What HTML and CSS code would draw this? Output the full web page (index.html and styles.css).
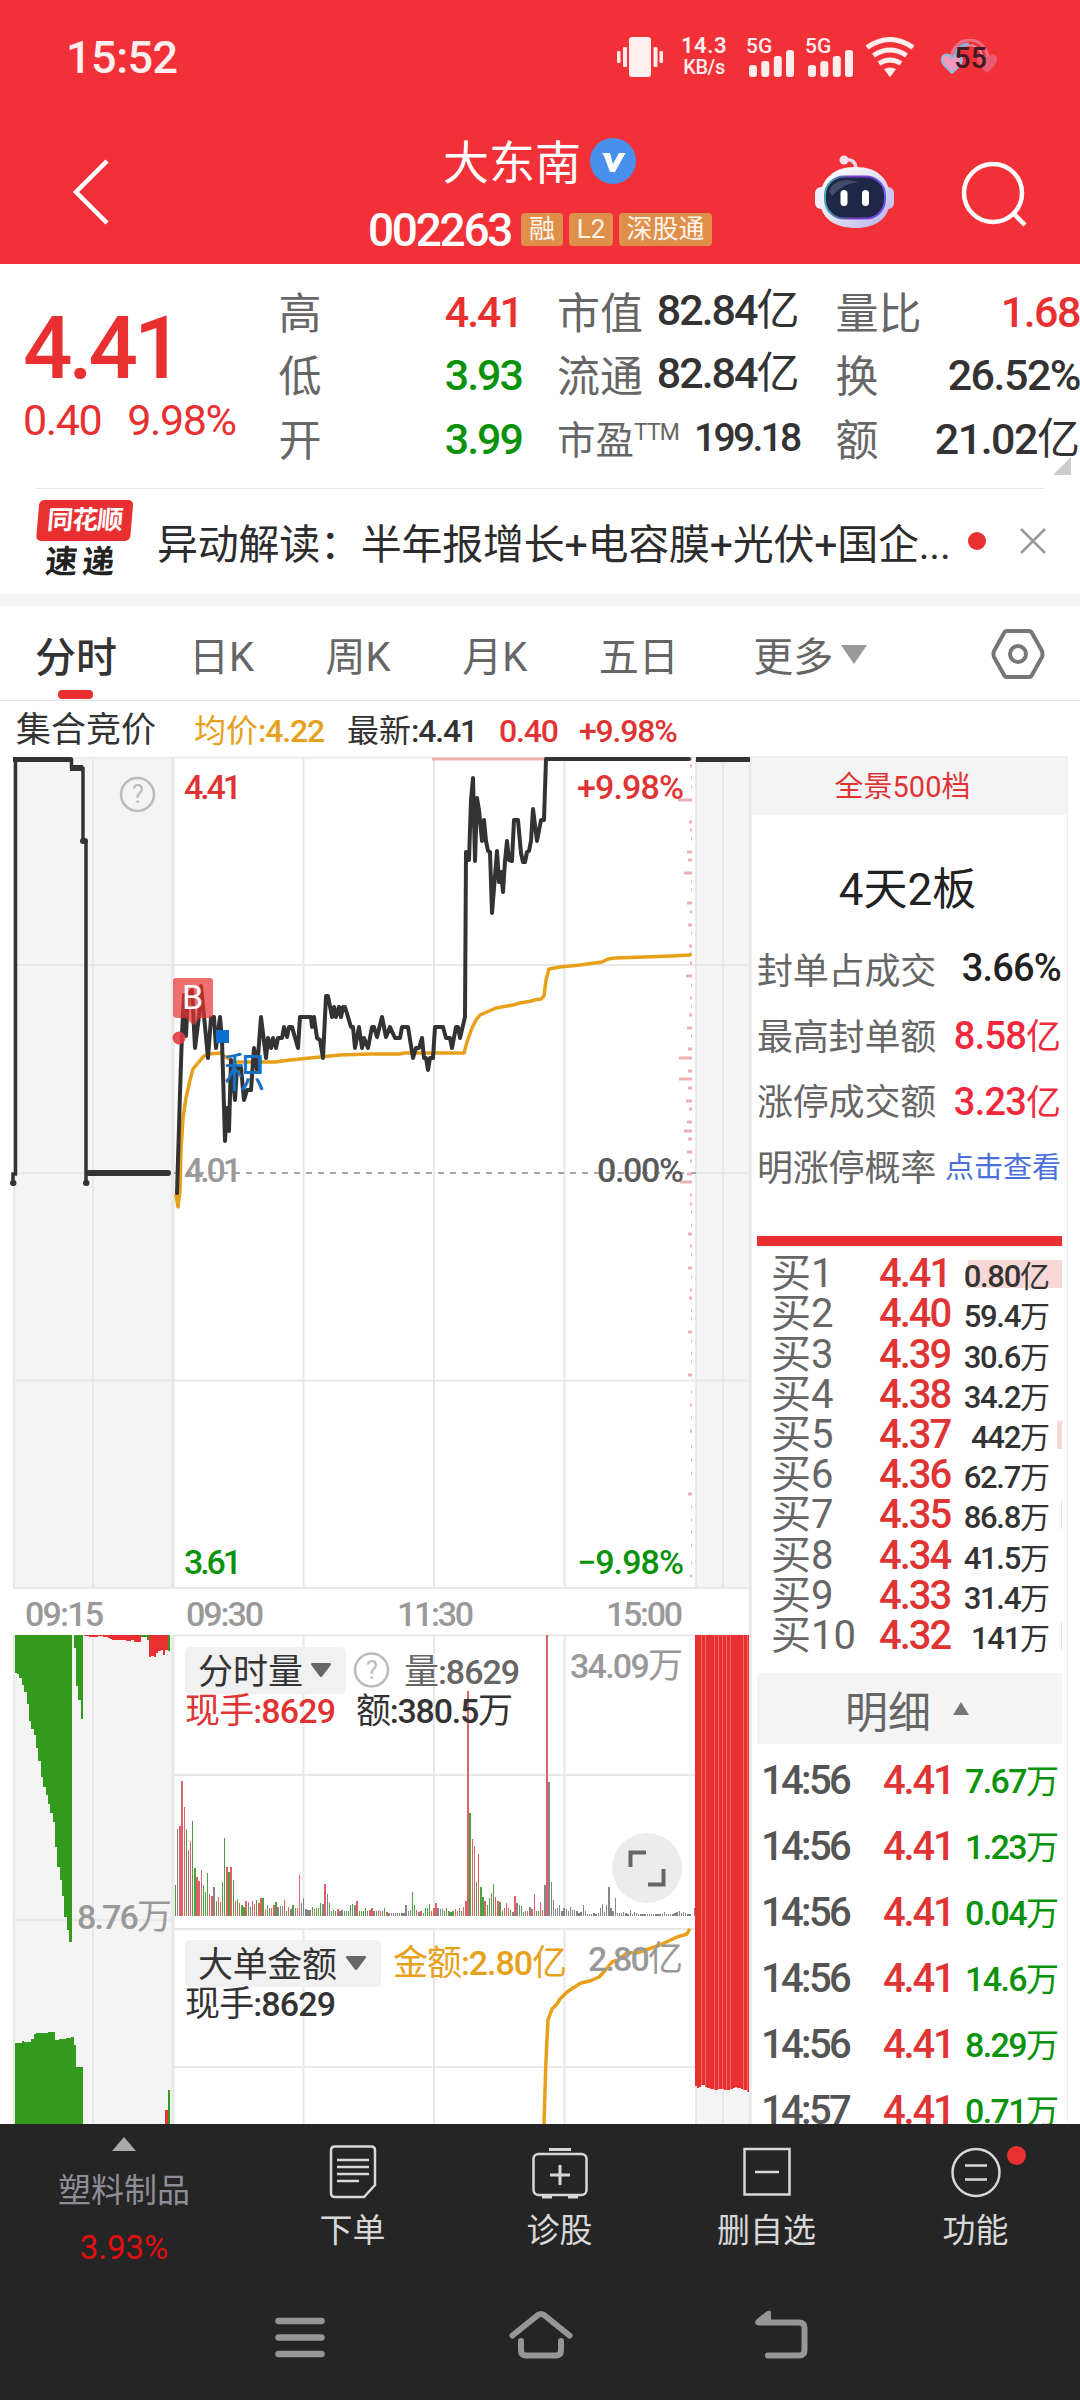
FILE: index.html
```html
<!DOCTYPE html>
<html lang="zh-CN">
<head>
<meta charset="utf-8">
<title>大东南 002263</title>
<link rel="stylesheet" href="styles.css">
</head>
<body>
<div class="screen">
  <header class="top">
    <div class="status">
      <span class="clock">15:52</span>
      <svg class="vibrate" width="46" height="40" viewBox="0 0 46 40" fill="#ffeeee"><rect x="12" width="22" height="40" rx="3"/><rect x="6" y="10" width="4" height="20" rx="1"/><rect y="14" width="3.5" height="12" rx="1"/><rect x="36.5" y="10" width="4" height="20" rx="1"/><rect x="42.5" y="14" width="3.5" height="12" rx="1"/></svg>
      <span class="net"><b>14.3</b><i>KB/s</i></span>
      <span class="sim"><em>5G</em><svg width="46" height="27" viewBox="0 0 46 27" fill="#ffeeee"><rect y="15" width="8" height="12" rx="3"/><rect x="12.3" y="11" width="8" height="16" rx="3"/><rect x="24.8" y="6" width="8" height="21" rx="3"/><rect x="37" width="8" height="27" rx="3"/></svg></span>
      <span class="sim"><em>5G</em><svg width="46" height="27" viewBox="0 0 46 27" fill="#ffeeee"><rect y="15" width="8" height="12" rx="3"/><rect x="12.3" y="11" width="8" height="16" rx="3"/><rect x="24.8" y="6" width="8" height="21" rx="3"/><rect x="37" width="8" height="27" rx="3"/></svg></span>
      <svg class="wifi" width="50" height="40" viewBox="0 0 50 40" fill="none" stroke="#ffeeee" stroke-width="5"><path d="M2 10.5Q25-5.500 48 10.500"/><path d="M8.500 18.500Q25 7.500 41.500 18.500"/><path d="M14 26.500Q25 19.500 36 26.500"/><path d="M19 32Q25 29 31 32L26 39Q25 40.500 24 39Z" fill="#ffeeee" stroke="none"/></svg>
      <span class="battery"><svg width="60" height="36" viewBox="0 0 60 36"><path d="M11 19C14-5 45-5 48 19" fill="none" stroke="#ee6f86" stroke-width="3"/><path d="M16 19C19 2 40 2 43 19" fill="none" stroke="#f08c9c" stroke-width="2"/><path d="M14 19C16 9 22 5 29 5" fill="none" stroke="#86b2d8" stroke-width="3"/><path d="M12 34C2 25 1 22 2 19C4 14 10 15 12 19C15 15 22 15 22 22Q21 26 12 34Z" fill="#f29ac0" stroke="#88bfe0" stroke-width="2"/><path d="M47 34C37 25 36 22 38 18C40 14 46 15 47 19C50 14 56 14 57 20Q57 26 47 34Z" fill="#ea5b73"/></svg><b>55</b></span>
    </div>
    <div class="titlebar">
      <svg class="back" width="38" height="66" viewBox="0 0 38 66" fill="none" stroke="#fff" stroke-width="4.500"><path d="M35 2L4 33L35 64"/></svg>
      <div class="name">
        <h1>大东南<svg width="46" height="46" viewBox="0 0 46 46"><circle cx="23" cy="23" r="23" fill="#4790ec"/><path d="M12 15H20L23 26L29 15H35.500L25 34H20L14 18Z" fill="#fff"/></svg></h1>
        <p><span class="code">002263</span><span class="tag">融</span><span class="tag t2">L2</span><span class="tag t3">深股通</span></p>
      </div>
      <svg class="robot" width="80" height="74" viewBox="0 0 80 74"><defs><linearGradient id="shell" x1="0" y1="0" x2="1" y2="1"><stop offset="0" stop-color="#fff"/><stop offset=".5" stop-color="#e4e3f5"/><stop offset="1" stop-color="#b4aeea"/></linearGradient><linearGradient id="rim"><stop offset="0" stop-color="#3fa6a8"/><stop offset=".5" stop-color="#7a35c8"/><stop offset="1" stop-color="#6a53f0"/></linearGradient></defs><path d="M29 5Q40 3 41 13" fill="none" stroke="#f0d5e6" stroke-width="3.500"/><circle cx="29" cy="5" r="4.500" fill="#f3dfee"/><rect x="0" y="32" width="14" height="22" rx="6" fill="#efeef9"/><rect x="66" y="32" width="13" height="22" rx="6" fill="#cbc6ee"/><path d="M40 12C64 12 75 25 75 44C75 64 60 73 41 73C20 73 5 64 5 44C5 25 18 12 40 12Z" fill="url(#shell)"/><rect x="10" y="21.500" width="60" height="42" rx="19" fill="#1f2746" stroke="url(#rim)" stroke-width="2"/><path d="M14 36Q18 25 34 25L44 27Q28 28 17 41Z" fill="#444c69"/><rect x="25.500" y="35" width="7" height="16" rx="3.500" fill="#fff"/><rect x="47" y="35" width="7" height="16" rx="3.500" fill="#fff"/></svg>
      <svg class="search" width="66" height="66" viewBox="0 0 66 66" fill="none" stroke="#fff" stroke-width="4.500"><circle cx="32" cy="32" r="29"/><path d="M52 52L64 64"/></svg>
    </div>
  </header>

  <section class="quote">
    <div class="last"><strong>4.41</strong><p><span>0.40</span><span>9.98%</span></p></div>
    <dl class="c1"><div><dt>高</dt><dd class="up">4.41</dd></div><div><dt>低</dt><dd class="down">3.93</dd></div><div><dt>开</dt><dd class="down">3.99</dd></div></dl>
    <dl class="c2"><div><dt>市值</dt><dd>82.84<u>亿</u></dd></div><div><dt>流通</dt><dd>82.84<u>亿</u></dd></div><div class="pe"><dt>市盈<sup>TTM</sup></dt><dd>199.18</dd></div></dl>
    <dl class="c3"><div><dt>量比</dt><dd class="up">1.68</dd></div><div><dt>换</dt><dd>26.52%</dd></div><div><dt>额</dt><dd>21.02<u>亿</u></dd></div></dl>
    <i class="corner"></i>
  </section>

  <section class="news">
    <div class="brand"><b>同花顺</b><i>速递</i></div>
    <p>异动解读：半年报增长+电容膜+光伏+国企...</p>
    <span class="dot"></span>
    <svg class="close" width="26" height="26" viewBox="0 0 26 26" stroke="#999" stroke-width="2.500"><path d="M1 1L25 25M25 1L1 25"/></svg>
  </section>

  <nav class="tabs">
    <a class="on">分时</a><a>日K</a><a>周K</a><a>月K</a><a>五日</a><a class="more">更多<i></i></a>
    <svg width="54" height="52" viewBox="0 0 54 52" fill="none" stroke="#777" stroke-width="4"><path d="M16 3H38Q40 3 41 5L51 23Q52 26 51 29L41 47Q40 49 38 49H16Q14 49 13 47L3 29Q2 26 3 23L13 5Q14 3 16 3Z"/><circle cx="27" cy="26" r="8"/></svg>
  </nav>

  <main class="body">
    <div class="left">
      <div class="legend"><span class="l0">集合竞价</span><span class="l1">均价<b>:4.22</b></span><span class="l2">最新<b>:4.41</b></span><span class="l3"><b>0.40</b></span><span class="l4"><b>+9.98%</b></span></div>
      <svg class="chart" width="752" height="1367" viewBox="0 757 752 1367">
        <g fill="#f4f4f4"><path d="M14 757H173V1588H14Z"/><path d="M14 1635H173V2124H14Z"/><path d="M696 757H751V1588H696Z"/><path d="M696 1635H751V2124H696Z"/></g>
        <g stroke="#e8e8e8" stroke-width="2" fill="none">
          <path d="M14 757.500H751M14 965H751M14 1173H173M696 1173H751M14 1380.500H751M14 1588H751M173 1635.500H696M173 1775H696M14 1920H173M696 1920H751M173 1929H696M173 2067H696"/>
          <path d="M14 757V1588M93 757V1588M303.500 757V1588M434 757V1588M564.500 757V1588M723 757V1588M14 1635V2124M93 1635V2124M303.500 1635V1916M303.500 1929V2124M434 1635V1916M434 1929V2124M564.500 1635V1916M564.500 1929V2124M723 1635V2124M696 757V1588M696 1635V2124"/>
          <path d="M173 757V1588M173 1635V2124M750.500 757V2124" stroke-width="3.500"/>
        </g>
        <path d="M174 1173H696" stroke="#888" stroke-width="1.600" stroke-dasharray="6 6"/>
        <g id="ticks" fill="#eeb1b3"></g>
        <g id="volume" shape-rendering="crispEdges"></g>
        <path d="M432 759H546" stroke="#eeb0b0" stroke-width="3"/>
        <rect x="185" y="1647" width="161" height="47" rx="5" fill="#f1f1f1"/>
        <rect x="185" y="1940" width="196" height="47" rx="5" fill="#f1f1f1"/>
        <g fill="none" stroke-linejoin="round" stroke-linecap="round">
          <path stroke="#e6a01a" stroke-width="3.500" d="M176 1195L178 1207L180 1190L181 1150L183 1118L186 1098L190 1080L193 1069L198 1063L204 1056L209 1054L221 1053L224 1056L235 1062L275 1062L290 1060L310 1058L340 1055L370 1054L400 1054L404 1053L464 1053L467 1042L472 1028L476 1020L480 1015L496 1008L513 1005L520 1003L532 1001L534 1000L541 999L544 996L546 980L549 969L560 967L580 965L602 962L608 959L615 958L645 957L672 956L690 955"/>
          <path stroke="#333" stroke-width="4" d="M177 1193L180 1093L182 1033L184 995L186 1036L188 995L192 990L195 1048L199 1016L201 986L204 1016L208 1058L211 1018L214 1017L216 1048L220 1017L222 1040L225 1141L227 1108L229 1131L231 1060L235 1100L237 1068L241 1068L244 1100L247 1090L251 1090L254 1048L257 1070L261 1017L266 1058L268 1038L271 1048L273 1038L276 1048L278 1038L282 1038L284 1027L287 1037L289 1027L292 1027L298 1048L300 1017L311 1017L312 1027L314 1017L317 1038L320 1040L323 1058L326 996L328 996L332 1017L334 1007L336 1017L339 1007L341 1017L343 1007L345 1007L348 1017L351 1027L353 1027L355 1048L359 1027L362 1048L364 1038L368 1048L372 1027L374 1027L377 1037L382 1017L386 1037L390 1027L395 1038L400 1038L402 1027L408 1027L413 1058L416 1048L419 1048L422 1038L424 1058L426 1058L428 1070L430 1058L433 1058L435 1027L443 1027L446 1038L450 1038L452 1048L456 1027L458 1027L460 1038L465 1017L466 852L469 860L471 800L473 778L475 861L477 798L479 810L482 841L484 820L486 841L488 851L490 852L492 913L497 851L499 882L501 872L503 892L505 861L507 841L509 860L512 861L514 820L518 820L521 853L523 862L525 862L527 852L529 851L531 841L533 809L537 841L541 820L544 820L546 759L689 759"/>
          <path stroke="#333" stroke-width="3.500" stroke-linejoin="miter" d="M13 1182V1174H15.500V759M71.500 759V768M83 768V841M86 841V1182"/>
          <path stroke="#333" stroke-width="6" stroke-linecap="butt" d="M13 759H71.500M70 768H83M696 759H750"/>
          <path stroke="#333" stroke-width="6" d="M83 841H85M13 1183H13.500M86 1183H86.500M89 1173H168"/>
          <path stroke="#e6a01a" stroke-width="3.500" d="M544 2124L545.700 2068L546.700 2045L548 2020L552 2009L557 2004L560 1999L567 1992L573 1988L581 1983L590 1981L599 1977L605 1970.500L612 1962L618 1960L627 1953L638 1952.500L647 1949.500L660 1945L677 1937L687 1934L689 1930"/>
        </g>
        <path d="M176 978H210Q213 978 213 981V1014Q213 1018 209 1018H200L193 1025L186 1018H177Q173 1018 173 1014V981Q173 978 176 978Z" fill="#e83030" fill-opacity=".7"/>
        <circle cx="179" cy="1038" r="6.500" fill="#e03c40" fill-opacity=".9"/>
        <rect x="216" y="1030" width="13" height="13" fill="#0a6fce"/>
        <g class="txt">
          <text x="182" y="1009" fill="#fff" class="mark">B</text>
          <text x="224" y="1087" class="mark tag-ji" fill="#1670c4">积</text>
          <text x="184" y="799" textLength="58" fill="#e03434">4.41</text>
          <text x="577" y="799" textLength="107" fill="#e03434">+9.98%</text>
          <text x="184" y="1182" textLength="58" fill="#999">4.01</text>
          <text x="597" y="1182" textLength="87" fill="#5a5a5a">0.00%</text>
          <text x="184" y="1573.500" textLength="58" fill="#0a920a">3.61</text>
          <text x="577" y="1573.500" textLength="107" fill="#0a920a">−9.98%</text>
          <g fill="#999">
            <text x="25" y="1626" textLength="79">09:15</text><text x="186" y="1626" textLength="78">09:30</text><text x="397" y="1626" textLength="77">11:30</text><text x="606" y="1626" textLength="77">15:00</text>
            <text x="570" y="1678" textLength="113">34.09<tspan class="cn">万</tspan></text>
            <text x="77" y="1929" textLength="95">8.76<tspan class="cn">万</tspan></text>
            <text x="588" y="1970.500" textLength="95">2.80<tspan class="cn">亿</tspan></text>
          </g>
          <g class="cn" fill="#333"><text x="198" y="1684">分时量</text><text x="198" y="1977" textLength="139">大单金额</text></g>
          <text x="404" y="1683.500" textLength="116" fill="#666"><tspan class="cn">量</tspan>:8629</text>
          <text x="185" y="1723" textLength="151" fill="#e03434"><tspan class="cn">现手</tspan>:8629</text>
          <text x="356" y="1723" textLength="157" fill="#333"><tspan class="cn">额</tspan>:380.5<tspan class="cn">万</tspan></text>
          <text x="393" y="1975" textLength="174" fill="#e6a01a"><tspan class="cn">金额</tspan>:2.80<tspan class="cn">亿</tspan></text>
          <text x="185" y="2016" textLength="151" fill="#333"><tspan class="cn">现手</tspan>:8629</text>
          <g fill="#bbb" class="help" text-anchor="middle"><text x="138" y="803">?</text><text x="372" y="1678.500">?</text></g>
        </g>
        <g fill="none" stroke="#bbb" stroke-width="2.500"><circle cx="137.500" cy="794.500" r="16.500"/><circle cx="371.500" cy="1670" r="16.500"/></g>
        <path d="M312 1663H330Q332 1664 330 1666L322.500 1676Q321 1678 319.500 1676L312 1666Q310 1664 312 1663ZM347 1956H365Q367 1957 365 1959L357.500 1969Q356 1971 354.500 1969L347 1959Q345 1957 347 1956Z" fill="#666"/>
        <circle cx="647" cy="1868" r="35" fill="#ececec"/>
        <path d="M630.500 1867V1852.500H646M648 1884.500H663.500V1869" fill="none" stroke="#666" stroke-width="4"/>
      </svg>
    </div>

    <aside class="side">
      <div class="depth">全景500档</div>
      <div class="boards">4天2板</div>
      <ul class="facts">
        <li><span>封单占成交</span><b>3.66%</b></li>
        <li><span>最高封单额</span><b class="hot">8.58<u>亿</u></b></li>
        <li><span>涨停成交额</span><b class="hot">3.23<u>亿</u></b></li>
        <li><span>明涨停概率</span><a>点击查看</a></li>
      </ul>
      <div class="ratio"></div>
      <ol class="bids">
        <li><span>买1</span><b>4.41</b><em style="--w:94px">0.80<u>亿</u></em></li>
        <li><span>买2</span><b>4.40</b><em>59.4<u>万</u></em></li>
        <li><span>买3</span><b>4.39</b><em>30.6<u>万</u></em></li>
        <li><span>买4</span><b>4.38</b><em>34.2<u>万</u></em></li>
        <li><span>买5</span><b>4.37</b><em style="--w:5px">442<u>万</u></em></li>
        <li><span>买6</span><b>4.36</b><em>62.7<u>万</u></em></li>
        <li><span>买7</span><b>4.35</b><em style="--w:1px">86.8<u>万</u></em></li>
        <li><span>买8</span><b>4.34</b><em>41.5<u>万</u></em></li>
        <li><span>买9</span><b>4.33</b><em>31.4<u>万</u></em></li>
        <li><span>买10</span><b>4.32</b><em style="--w:1px">141<u>万</u></em></li>
      </ol>
      <div class="detail">明细<i></i></div>
      <ol class="trades">
        <li><span>14:56</span><b>4.41</b><em>7.67<u>万</u></em></li>
        <li><span>14:56</span><b>4.41</b><em>1.23<u>万</u></em></li>
        <li><span>14:56</span><b>4.41</b><em>0.04<u>万</u></em></li>
        <li><span>14:56</span><b>4.41</b><em>14.6<u>万</u></em></li>
        <li><span>14:56</span><b>4.41</b><em>8.29<u>万</u></em></li>
        <li><span>14:57</span><b>4.41</b><em>0.71<u>万</u></em></li>
      </ol>
    </aside>
  </main>

  <footer class="bottom">
    <div class="actions">
      <div class="sector"><i></i><span>塑料制品</span><b>3.93%</b></div>
      <div class="act a1"><svg width="48" height="54" viewBox="0 0 48 54" fill="none" stroke="#d8d8d8" stroke-width="2.500"><path d="M6 1.500H42Q46 1.500 46 5.500V40L35 52H6Q2 52 2 48V5.500Q2 1.500 6 1.500Z"/><path d="M8 15H40M8 22H40M8 29H40M8 36H30"/></svg><span>下单</span></div>
      <div class="act a2"><svg width="56" height="54" viewBox="0 0 56 54" fill="none" stroke="#d8d8d8" stroke-width="2.500"><path d="M17 4.500H39" stroke-width="3"/><rect x="1.500" y="9" width="53" height="41" rx="5"/><path d="M18 30H38M28 20V40M10 52H20M36 52H46" stroke-width="3"/></svg><span>诊股</span></div>
      <div class="act a3"><svg width="48" height="54" viewBox="0 0 48 54" fill="none" stroke="#d8d8d8" stroke-width="2.500"><path d="M1.500 4H46.500V49.500H1.500ZM12 27H36"/></svg><span>删自选</span></div>
      <div class="act a4"><svg width="50" height="54" viewBox="0 0 50 54" fill="none" stroke="#d8d8d8" stroke-width="2.500"><circle cx="25" cy="27.500" r="23.500"/><path d="M14 20.500H36M14 34.500H36"/></svg><span>功能</span><em></em></div>
    </div>
    <div class="sysnav">
      <svg width="50" height="48" viewBox="0 0 50 48" stroke="#969696" stroke-width="6.500" stroke-linecap="round"><path d="M3.500 11H46.500M3.500 27.500H46.500M3.500 44H46.500"/></svg>
      <svg width="64" height="50" viewBox="0 0 64 50" fill="none" stroke="#969696" stroke-width="6" stroke-linecap="round" stroke-linejoin="round"><path d="M3.500 25.500L29 5Q32 3 35 5L60.500 25.500M12 31V40Q12 45.500 17 45.500H47Q52 45.500 52 40V31"/></svg>
      <svg width="54" height="50" viewBox="0 0 54 50" fill="none" stroke="#969696" stroke-width="6" stroke-linecap="round" stroke-linejoin="round"><path d="M5 12.500H45Q50.500 12.500 50.500 18V40Q50.500 45.500 45 45.500H14"/><path d="M17 2V15H3Q-1 13 3 9L12 2Q16-1 17 2Z" fill="#969696" stroke="none"/></svg>
    </div>
  </footer>
</div>
<script src="chart.js"></script>
</body>
</html>
```
FILE: chart.js
```js
const NS = 'http://www.w3.org/2000/svg';
const vol = document.getElementById('volume');
const ticks = document.getElementById('ticks');

function bar(parent, x, y, w, h, fill) {
  const r = document.createElementNS(NS, 'rect');
  r.setAttribute('x', x);
  r.setAttribute('y', y);
  r.setAttribute('width', w);
  r.setAttribute('height', h);
  if (fill) r.setAttribute('fill', fill);
  parent.appendChild(r);
}

/* minute volume: height then colour (r up, g down, k flat) */
const minute = ('80g 228k 235r 353r 285r 227g 173r 195r 247g 125g 103r 92r 119r 80g 64g 113g 58r 53r 76k 38g 50r 37r 90g 203g ' +
  '128r 115g 127r 94g 40r 44g 34r 28g 24g 40r 37k 24g 40r 32r 42g 34r 47r 46g 18r 28k 22g 20r 28r 36g 24k 25k 25k 42r 13g 23r ' +
  '18k 28g 20k 20r 108r 34k 46k 18k 16k 16k 24g 18r 20g 20g 34g 32k 84r 58k 34g 13k 16g 14g 19r 14k 16k 14g 12k 12g 28g 32g ' +
  '28k 38r 14g 12g 14g 20g 12k 16r 20r 14k 12g 16r 14r 14g 20g 10r 8k 8k 7k 8g 8r 7k 8k 7k 28k 14k 16k 62g 28g 16r 10k 12r ' +
  '8k 22g 20g 32g 14r 20r 34r 20k 18k 18k 12g 20g 12k 10g 14g 18r 14r 20k 14g 24r 38r 588r 270g 200r 182r 88g 162r 75g 50g ' +
  '40r 28g 48g 60k 84g 50r 38r 36g 14g 20r 34r 22r 16g 10k 52r 34k 28k 26g 10g 14k 14r 24k 18r 58r 12g 14g 36r 16r 80k 735r ' +
  '350k 90k 42k 18k 20k 28k 12k 20k 18k 12k 24k 16k 16k 14k 8k 10k 30k 12k 6k 6k 6k 7k 6k 7k 22k 32k 10k 30k 75k 20k 14k ' +
  '46k 8k 8k 7k 10k 7k 6k 16k 6k 10k 9k 5k 5k 5k 4k 4k 5k 6k 4k 4k 4k 4k 5k 10k 5k 6k 5k 5k 8k 10k 14k 8k 10k 8k 6k 6k 0k 20k').split(' ');
const tone = { r: '#dd6165', g: '#4da142', k: '#858585' };
minute.forEach((m, i) => {
  const h = parseInt(m, 10) / 2.613;
  bar(vol, (175 + i * 2.134).toFixed(2), (1916 - h).toFixed(2), 1.35, h.toFixed(2), tone[m.slice(-1)]);
});

/* opening auction */
const green = '#329b1d', red = '#e83030';
const matched = [348, 350, 362, 380, 397, 430, 475, 494, 510, 545, 578, 621, 645, 668, 690, 713, 738, 803, 855, 890, 932, 985, 1021, 1051];
matched.forEach((b, i) => bar(vol, 14.7 + i * 2.37, 1635, 2.4, (b - 249) / 2.613, green));
[282, 381, 418, 468].forEach((b, i) => bar(vol, 73.5 + i * 2.37, 1635, 2.4, (b - 249) / 2.613, green));
const late = [3, 3, 5, 6, 5, 4, 3, 3, 4, 5, 8, 11, 12, 12, 13, 14, 14, 13, 15, 16, 12, 18, 17, 18];
late.forEach((h, i) => bar(vol, 84 + i * 2.36, 1635, 2.4, h / 2.613, red));
bar(vol, 141, 1635, 8, 1.5, green);
bar(vol, 147, 1635, 2, 5, green);
[58, 56, 58, 48, 41, 39, 53, 40].forEach((h, i) => bar(vol, 149 + i * 2.33, 1635, 2.4, h / 2.613, red));
bar(vol, 167.5, 1635, 2.6, 16, green);

const rest = [1314, 1314, 1314, 1310, 1312, 1312, 1312, 1303, 1292, 1288, 1288, 1287, 1287, 1287, 1286, 1286, 1286, 1307, 1306, 1305, 1304, 1303, 1301, 1300, 1299, 1320, 1377, 1377, 1377];
rest.forEach((t, i) => {
  const y = 1540 + t / 2.613;
  bar(vol, 14.7 + i * 2.352, y, 2.4, 2124 - y, green);
});
bar(vol, 165, 2110, 2.5, 14, red);
bar(vol, 167.5, 2090, 2.8, 34, green);

/* closing auction */
const close = [1428, 1432, 1430, 1425, 1426, 1431, 1432, 1434, 1435, 1437, 1437, 1436, 1435, 1436, 1437, 1437, 1437, 1436, 1433, 1431, 1433, 1432, 1434, 1437, 1438, 1442];
close.forEach((b, i) => {
  const h = (b - 249) / 2.613;
  bar(vol, 695 + i * 2.08, 1635, 2.2, h, red);
  if (i % 2 && i > 2) bar(vol, 695 + i * 2.08, 1635, 0.8, h, '#f06a6a');
});

/* price distribution at the right edge of the session */
[[759, 2], [766, 2], [778, 1], [787, 1], [800, 14], [822, 3], [830, 2], [839, 1], [852, 5], [860, 4], [873, 8], [882, 1], [890, 1], [903, 5], [912, 2], [925, 4],
 [933, 1], [946, 3], [954, 3], [963, 2], [976, 6], [985, 1], [998, 2], [1006, 1], [1015, 3], [1028, 5], [1036, 1], [1049, 4], [1058, 13], [1071, 4], [1079, 13],
 [1088, 4], [1101, 6], [1109, 3], [1122, 5], [1131, 8], [1139, 4], [1152, 5], [1161, 2], [1174, 5], [1182, 12], [1195, 2], [1204, 2], [1212, 1], [1225, 1], [1234, 4],
 [1246, 2], [1255, 1], [1268, 4], [1277, 1], [1290, 2], [1298, 3], [1311, 1], [1319, 1], [1332, 4], [1341, 1], [1353, 1], [1362, 1], [1375, 4], [1392, 1], [1405, 2],
 [1418, 1], [1431, 2], [1447, 1], [1460, 1], [1473, 1], [1494, 4], [1507, 1], [1520, 1], [1532, 1], [1545, 1], [1563, 1], [1576, 2]
].forEach(([y, w]) => bar(ticks, 692 - w, y - 1.5, w, 3));
```
FILE: styles.css
```css
* { box-sizing: border-box; margin: 0; padding: 0; }
body { background: #fff; font-family: Roboto, "Noto Sans CJK SC", sans-serif; color: #333; }
i, em { font-style: normal; }
u { text-decoration: none; font-weight: 400; letter-spacing: 0; }
ul, ol { list-style: none; }
svg { display: block; flex: none; }
.screen { width: 1080px; height: 2400px; overflow: hidden; display: flex; flex-direction: column; }
.screen > * { flex: none; }

.top { background: #f23038; height: 264px; color: #fff; }
.status { height: 115px; padding: 37px 80px 0 66px; display: flex; align-items: flex-start; color: #ffeeee; }
.clock { font-size: 45px; line-height: 41px; font-weight: 500; letter-spacing: -.5px; width: 552px; }
.net { display: flex; flex-direction: column; width: 50px; margin: -1px 0 0 16px; align-items: center; }
.net b { font-size: 22px; line-height: 20px; font-weight: 600; letter-spacing: .5px; }
.net i { font-size: 20px; line-height: 23px; font-weight: 500; letter-spacing: -.5px; }
.sim { position: relative; width: 46px; margin-left: 20px; padding-top: 13px; }
.sim + .sim { margin-left: 13px; }
.sim em { position: absolute; left: -3px; top: -2px; font-size: 21px; line-height: 22px; font-weight: 500; }
.wifi { margin-left: 11px; }
.battery { position: relative; margin: 2px 0 0 25px; }
.battery b { position: absolute; left: 14px; top: 3px; font-size: 29px; line-height: 32px; font-weight: 500; color: #421a25; }
.titlebar { height: 149px; display: flex; align-items: flex-start; padding-left: 72px; }
.back { margin-top: 44px; }
.name { margin-left: 258px; width: 350px; }
.name h1 { font-size: 46px; line-height: 56px; font-weight: 400; display: flex; align-items: center; padding: 20px 0 0 75px; gap: 9px; }
.name h1 svg { margin-top: -5px; }
.name p { display: flex; align-items: center; margin-top: 21px; gap: 6px; height: 34px; }
.code { font-size: 46px; line-height: 36px; font-weight: 500; letter-spacing: -2.300px; width: 147px; white-space: nowrap; padding-top: 2px; }
.tag { background: #e08f4a; border-radius: 4px; height: 33px; line-height: 32px; font-size: 26px; width: 42px; text-align: center; color: #fff4ea; font-weight: 400; }
.t2 { width: 44px; }
.t3 { width: 93px; }
.robot { margin: 40px 0 0 97px; }
.search { margin: 46px 0 0 66px; }

.quote { height: 224px; display: flex; padding-top: 15px; position: relative; }
.up, .last { color: #e83030 !important; }
.down { color: #0a920a !important; }
.last { width: 279px; padding: 34px 0 0 23px; font-weight: 500; }
.last strong { display: block; font-size: 87px; line-height: 70px; font-weight: 500; letter-spacing: -4px; }
.last p { display: flex; gap: 26px; font-size: 43px; line-height: 50px; margin-top: 12px; letter-spacing: -1.400px; font-weight: 400; }
dl > div { display: flex; justify-content: space-between; align-items: center; height: 63.500px; }
dt { font-size: 43px; font-weight: 400; color: #666; white-space: nowrap; margin-top: -2px; }
dd { font-size: 43px; font-weight: 500; color: #333; letter-spacing: -2px; white-space: nowrap; }
dd u { font-size: 43px; line-height: 50px; }
.c1 { width: 244px; }
.c1 dd, .c3 dd { margin-top: 2px; }
.c2 { width: 243px; margin-left: 35px; }
.c2 dd { margin-top: -2px; }
.c3 { width: 245px; margin-left: 36px; }
.c3 dd { letter-spacing: -1.500px; }
.pe dt { font-size: 38.500px; display: flex; align-items: center; }
.pe sup { font-size: 23px; line-height: 30px; align-self: flex-start; margin-top: 9px; letter-spacing: -1px; }
.pe dd { font-size: 39px; letter-spacing: -2.700px; margin-top: 1px; }
.corner { position: absolute; right: 9px; top: 193px; border: 9px solid transparent; border-right-color: #ccc; border-bottom-color: #ccc; }

.news { height: 106px; display: flex; align-items: center; padding: 6px 34px 0 36px; background: linear-gradient(#e8e8e8, #e8e8e8) 35px 0 / 1010px 1px no-repeat; }
.brand { width: 94px; height: 80px; margin-right: 27px; transform: translateY(-4px) skewX(-5deg); text-align: center; }
.brand b { display: block; background: #e83030; color: #fff; border-radius: 5px; height: 41px; line-height: 40px; font-size: 26px; font-weight: 700; letter-spacing: -1px; }
.brand i { display: block; font-size: 32px; line-height: 43px; font-weight: 700; color: #222; letter-spacing: 5px; padding-left: 3px; }
.news p { font-size: 41px; font-weight: 400; width: 793px; white-space: nowrap; color: #2c2c2c; line-height: 60px; letter-spacing: -.25px; margin-top: 2px; }
.dot { width: 18px; height: 18px; border-radius: 50%; background: #e83030; margin-left: 18px; margin-top: -6px; }
.close { margin: -6px 0 0 auto; }

.tabs { border-top: 12px solid #f4f4f4; border-bottom: 1px solid #e4e4e4; height: 107px; display: flex; align-items: center; padding: 2px 35px 0 35px; font-size: 40px; font-weight: 400; color: #666; }
.tabs a { margin-right: 71.500px; white-space: nowrap; }
.tabs a.on { color: #333; font-weight: 500; font-size: 41px; margin-right: 72px; position: relative; }
.on::after { content: ""; position: absolute; left: 23px; top: 66px; width: 35px; height: 9px; border-radius: 4px; background: #e83030; }
.tabs .more { display: flex; align-items: center; margin: 0 0 0 3px; gap: 8px; }
.more i { border: 13px solid transparent; border-top: 19px solid #999; border-bottom: 0; }
.tabs svg { margin-left: auto; }

.body { height: 1423px; display: flex; overflow: hidden; }
.left { width: 751px; flex: none; }
.legend { height: 56px; padding: 2px 0 0 16px; display: flex; align-items: baseline; font-size: 32px; line-height: 56px; font-weight: 400; white-space: nowrap; }
.legend b { font-weight: 500; letter-spacing: -1.200px; }
.l0 { width: 178px; font-size: 35px; }
.l1 { width: 153px; color: #e6a01a; }
.l2 { width: 152px; }
.l3 { width: 80px; color: #e03434; }
.l4 { color: #e03434; }
.txt { font-family: Roboto, "Noto Sans CJK SC", sans-serif; font-weight: 500; font-size: 34px; }
.cn { font-weight: 400; font-size: 35px; }
.mark { font-weight: 400; }
.tag-ji { font-size: 41px; }
.help { font-size: 25px; font-weight: 400; }

.side { width: 317px; flex: none; margin-top: 55px; border: 1px solid #eee; border-bottom: 0; height: 1368px; display: flex; flex-direction: column; }
.side > * { flex: none; }
.depth { height: 58px; background: #f4f4f4; color: #e03434; font-size: 29px; font-weight: 400; line-height: 61px; text-align: center; padding-right: 14px; }
.boards { font-size: 44px; font-weight: 400; color: #222; line-height: 60px; margin-top: 45px; text-align: center; padding-right: 4px; }
.facts { padding: 15px 6px 0 5px; }
.facts li { display: flex; justify-content: space-between; align-items: center; height: 65.800px; font-size: 36px; white-space: nowrap; }
.facts span { font-weight: 400; color: #666; letter-spacing: -.2px; }
.facts b { font-weight: 500; font-size: 38px; letter-spacing: -.8px; color: #222; }
.facts u { font-size: 35px; letter-spacing: 0; }
.facts .hot { color: #f02a3c; }
.facts a { color: #4a70dc; font-size: 29px; font-weight: 400; }
.ratio { height: 10px; background: #e83030; margin: 38px 5px 0 5px; }
.bids { margin: 8px 5px 0 5px; }
.bids li { display: grid; grid-template-columns: 122px 82px 1fr; align-items: center; height: 40.200px; line-height: 40.200px; white-space: nowrap; }
.bids span { font-size: 40px; font-weight: 400; color: #666; padding-left: 14px; }
.bids b { font-size: 40px; font-weight: 500; color: #e03434; letter-spacing: -2px; }
.bids em { font-size: 31px; font-weight: 500; text-align: right; padding-right: 12px; height: 28px; line-height: 34px; letter-spacing: -1.300px; background: linear-gradient(#f8d7d7, #f8d7d7) right / var(--w, 0) 100% no-repeat; }
.bids u { font-size: 30px; }
.detail { margin: 17px 5px 0 5px; height: 71px; background: #f4f4f4; color: #666; font-size: 43px; font-weight: 400; display: flex; align-items: center; justify-content: center; gap: 22px; padding-right: 5px; }
.detail i { border: 8.500px solid transparent; border-bottom: 13px solid #777; border-top: 0; }
.trades { padding: 3px 8px 0 9px; }
.trades li { display: grid; grid-template-columns: 122px 70px 1fr; align-items: center; height: 66px; white-space: nowrap; }
.trades span { font-size: 40px; font-weight: 500; color: #555; letter-spacing: -2.700px; }
.trades b { font-size: 40px; font-weight: 500; color: #e03434; letter-spacing: -2.200px; }
.trades em { font-size: 34px; font-weight: 500; color: #0a920a; text-align: right; letter-spacing: -1.600px; line-height: 40px; padding-top: 3px; }
.trades u { font-size: 33px; }

.bottom { background: #252525; height: 276px; color: #d8d8d8; }
.actions { display: flex; height: 176px; padding-left: 41px; }
.sector { width: 166px; display: flex; flex-direction: column; align-items: center; padding-top: 13px; }
.sector i { border: 12.500px solid transparent; border-bottom: 14px solid #aaa; border-top: 0; }
.sector span { font-size: 33px; line-height: 44px; font-weight: 400; color: #8d8d97; margin-top: 18px; white-space: nowrap; }
.sector b { font-size: 33px; line-height: 40px; font-weight: 400; color: #e01010; margin-top: 15px; }
.act { width: 207px; display: flex; flex-direction: column; align-items: center; padding-top: 21px; position: relative; font-size: 33px; font-weight: 400; }
.a1 { margin-left: 42px; }
.a4 { margin-left: 2px; }
.act span { line-height: 44px; margin-top: 10px; }
.act em { position: absolute; right: 53px; top: 22px; width: 19px; height: 19px; border-radius: 50%; background: #e83030; }
.sysnav { display: flex; padding: 10px 0 0 275px; }
.sysnav svg + svg { margin-left: 184px; }
.sysnav svg + svg + svg { margin-left: 181px; }
```
